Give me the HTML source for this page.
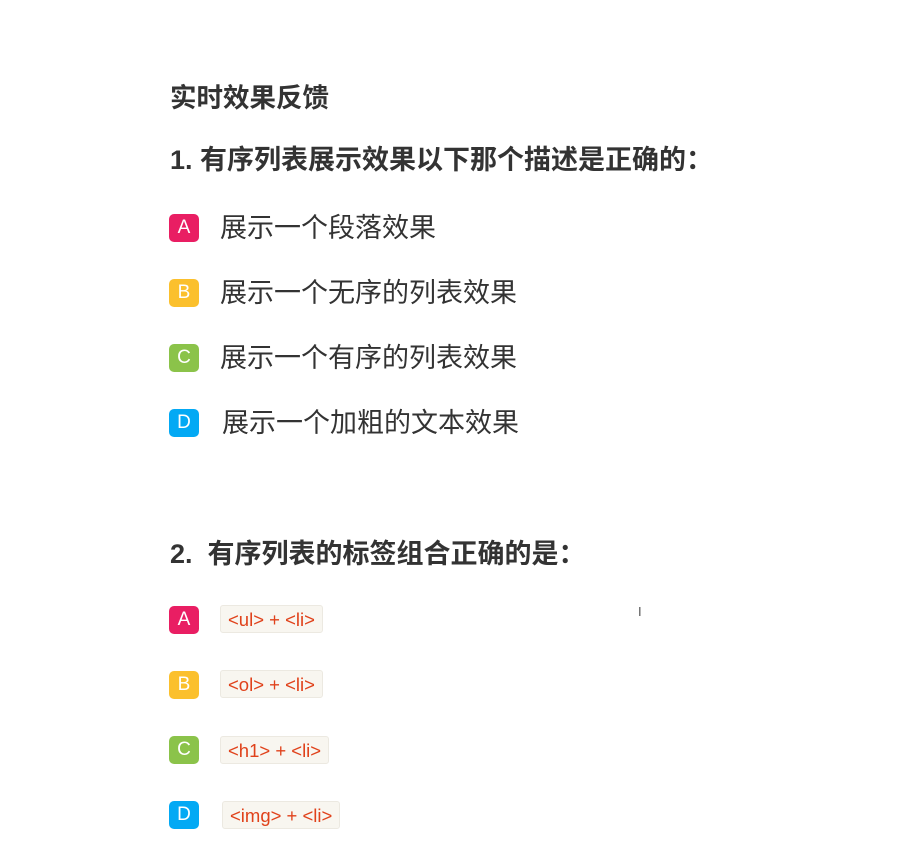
<!DOCTYPE html>
<html><head><meta charset="utf-8"><style>
body{margin:0;width:914px;height:859px;background:#fff;position:relative;font-family:"Liberation Sans","Noto Sans CJK SC",sans-serif;color:#333;overflow:hidden}
.a{position:absolute;white-space:nowrap}
.h{font-weight:bold;line-height:1}
.b{position:absolute;left:169px;width:30px;height:28px;border-radius:5px;color:#fff;font-size:19px;line-height:28px;text-align:center}
.t{position:absolute;left:220px;font-size:27px;line-height:1;color:#333}
.c{position:absolute;left:220px;height:28px;line-height:28px;padding:0 7px;background:#f8f6f0;border:1px solid #ece9e1;border-radius:3px;color:#e0421b;font-size:18.5px;box-sizing:border-box}
.r{background:#e91e63}.y{background:#fbc02d}.g{background:#8bc34a}.bl{background:#03a9f4}
</style></head><body>
<div class="a h" style="left:170px;top:85px;font-size:26.5px">实时效果反馈</div>
<div class="a h" style="left:170px;top:147px;font-size:27px">1. 有序列表展示效果以下那个描述是正确的：</div>
<div class="b r" style="top:214px">A</div><div class="t" style="top:215px">展示一个段落效果</div>
<div class="b y" style="top:279px">B</div><div class="t" style="top:280px">展示一个无序的列表效果</div>
<div class="b g" style="top:344px">C</div><div class="t" style="top:345px">展示一个有序的列表效果</div>
<div class="b bl" style="top:409px">D</div><div class="t" style="top:410px;left:222px">展示一个加粗的文本效果</div>
<div class="a h" style="left:170px;top:541px;font-size:27px">2.&nbsp; 有序列表的标签组合正确的是：</div>
<div class="b r" style="top:606px">A</div><div class="c" style="top:605px">&lt;ul&gt; + &lt;li&gt;</div>
<div class="b y" style="top:671px">B</div><div class="c" style="top:670px">&lt;ol&gt; + &lt;li&gt;</div>
<div class="b g" style="top:736px">C</div><div class="c" style="top:736px">&lt;h1&gt; + &lt;li&gt;</div>
<div class="b bl" style="top:801px">D</div><div class="c" style="top:801px;left:222px">&lt;img&gt; + &lt;li&gt;</div>
<div class="a" style="left:638px;top:604px;font-size:13px;color:#555">I</div>
</body></html>
